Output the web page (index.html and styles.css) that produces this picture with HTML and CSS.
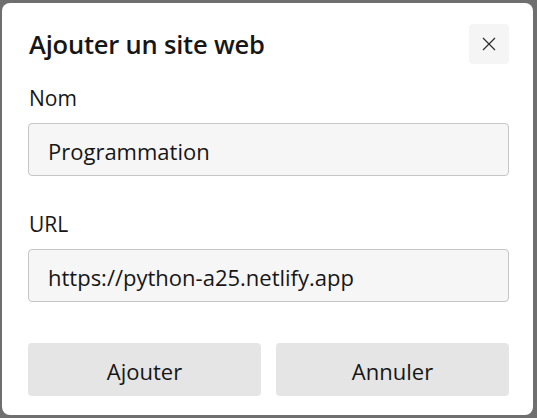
FILE: index.html
```html
<!DOCTYPE html>
<html lang="fr">
<head>
<meta charset="utf-8">
<title>Ajouter un site web</title>
<link rel="stylesheet" href="styles.css">
</head>
<body>
<div class="dialog">
  <div class="header">
    <h1 class="title">Ajouter un site web</h1>
    <button class="close" aria-label="Fermer">
      <svg width="14" height="14" viewBox="0 0 14 14"><path d="M1 1 L13 13 M13 1 L1 13" stroke="#2b2b2b" stroke-width="1.2" fill="none"/></svg>
    </button>
  </div>
  <label class="label">Nom</label>
  <div class="input">Programmation</div>
  <label class="label label-url">URL</label>
  <div class="input">https://python-a25.netlify.app</div>
  <div class="actions">
    <button class="btn">Ajouter</button>
    <button class="btn">Annuler</button>
  </div>
</div>
</body>
</html>
```

FILE: styles.css
```css
html, body {
  margin: 0;
  padding: 0;
}
body {
  background: #6f6f6f;
  width: 537px;
  height: 418px;
  overflow: hidden;
  font-family: "Open Sans", "Noto Sans", sans-serif;
  color: #161616;
}
.dialog {
  margin: 3px 4px 0 2px;
  width: 531px;
  height: 412px;
  box-sizing: border-box;
  background: #ffffff;
  border-radius: 8px;
  padding: 21px 24px 0 26px;
  display: flex;
  flex-direction: column;
}
.header {
  display: flex;
  justify-content: space-between;
  align-items: flex-start;
  height: 40px;
}
.title {
  margin: 0 0 0 1px;
  font-size: 25.5px;
  font-weight: 600;
  line-height: 40px;
  letter-spacing: -0.2px;
}
.close {
  width: 40px;
  height: 40px;
  border: none;
  border-radius: 4px;
  background: #f5f5f5;
  display: flex;
  align-items: center;
  justify-content: center;
  padding: 0;
}
.label {
  display: block;
  margin: 20px 0 0 1px;
  font-size: 21px;
  line-height: 28px;
}
.label-url {
  margin-top: 34px;
}
.input {
  margin-top: 11px;
  height: 53px;
  box-sizing: border-box;
  border: 1px solid #c6c6c6;
  border-radius: 4px;
  background: #f6f6f6;
  padding: 3px 19px 0;
  display: flex;
  align-items: center;
  font-size: 22px;
}
.actions {
  margin-top: 41px;
  display: flex;
  gap: 15px;
}
.btn {
  flex: 1;
  height: 53px;
  border: none;
  border-radius: 4px;
  background: #e5e5e5;
  font-family: inherit;
  font-size: 22px;
  color: #161616;
  padding: 3px 0 0;
}
```
